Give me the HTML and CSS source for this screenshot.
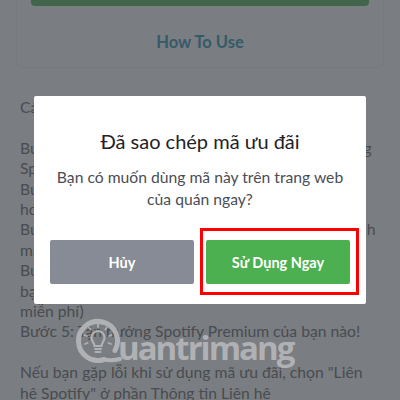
FILE: index.html
```html
<!DOCTYPE html>
<html lang="vi">
<head>
<meta charset="utf-8">
<title>Spotify</title>
<link rel="stylesheet" href="styles.css">
</head>
<body>
<div class="page">
  <section class="card">
    <div class="card-btn"></div>
    <a class="how">How To Use</a>
  </section>
  <article class="steps">
    <p>Cách sử dụng mã ưu đãi:</p>
    <p>Bước 1: Nhấn nút Sử Dụng Ngay để vào trang đăng<br>Spotify Premium<br>Bước 2: Đăng nhập tài khoản<br>hoặc tạo tài khoản mới<br>Bước 3: Chọn phương thức, rồi nhập mã thật nhanh<br>mã ưu đãi<br>Bước 4: Xác nhận thanh toán để<br>bạn nhận được 3 tháng<br>miễn phí)<br>Bước 5: Tận hưởng Spotify Premium của bạn nào!</p>
    <p>Nếu bạn gặp lỗi khi sử dụng mã ưu đãi, chọn "Liên<br>hệ Spotify" ở phần Thông tin Liên hệ</p>
  </article>
</div>
<div class="overlay">
  <div class="modal">
    <h2 class="title">Đã sao chép mã ưu đãi</h2>
    <p class="msg">Bạn có muốn dùng mã này trên trang web<br>của quán ngay?</p>
    <div class="actions">
      <button class="btn cancel">Hủy</button>
      <button class="btn go">Sử Dụng Ngay</button>
    </div>
  </div>
</div>
<div class="mark-box"></div>
<div class="wm">
  <svg class="wm-q" viewBox="0 0 48 48" width="48" height="48" aria-hidden="true">
    <path d="M30 42.500A19.500 19.500 0 1 1 41 33.500" fill="none" stroke="#b0b1b4" stroke-width="5" stroke-linecap="round"/>
    <path d="M30 42.500Q38 44 46 42" fill="none" stroke="#b0b1b4" stroke-width="4" stroke-linecap="round"/>
    <path d="M20.500 29c0-3-3-4.500-3-8.500a6.500 6.500 0 0 1 13 0c0 4-3 5.500-3 8.500z" fill="none" stroke="#b0b1b4" stroke-width="2.200"/>
    <path d="M21 32h6M21.500 35h5" stroke="#b0b1b4" stroke-width="2" stroke-linecap="round"/>
    <path d="M24 7v3M15 10.500l1.600 2M33 10.500l-1.600 2M10.500 18l2.500 1M37.500 18l-2.500 1M11 27l2.500-1M37 27l-2.500-1" stroke="#b0b1b4" stroke-width="1.800" stroke-linecap="round"/>
  </svg>
  <span class="wm-text">uantrimang</span>
</div>
</body>
</html>
```
FILE: styles.css
```css
* { box-sizing: border-box; }
html, body { margin: 0; height: 400px; overflow: hidden; }
body { background: #fff; font-family: Lato, "Noto Sans", sans-serif; }
.page { padding: 0 16px; height: 400px; overflow: hidden; }
.card {
  height: 68px;
  border: 1px solid #f0f0f0;
  border-top: 0;
  border-radius: 0 0 8px 8px;
  padding: 0 14px;
  display: flex;
  flex-direction: column;
  align-items: center;
}
.card-btn { width: 100%; height: 6px; background: #4caf50; border-radius: 0 0 4px 4px; flex: none; }
.how { margin-top: 26px; font-size: 16.5px; line-height: 20px; font-weight: 700; color: #1e8fb4; }
.steps { padding: 29px 4px 0; font-size: 15.7px; line-height: 20.4px; color: #606060; white-space: nowrap; }
.steps p { margin: 0 0 20.4px; }
.overlay {
  position: absolute; inset: 0;
  background: rgba(63, 66, 72, .69);
  display: flex; justify-content: center; align-items: flex-start;
  padding-top: 96px;
}
.modal {
  width: 332px; height: 208px;
  background: #fff; border-radius: 2px;
  padding: 32px 16px 0;
  text-align: center;
}
.title { margin: 0; font-size: 20px; line-height: 26px; font-weight: 400; color: #1f2226; }
.msg { margin: 12px 0 0; font-size: 15.7px; line-height: 22px; color: #4a4d55; }
.actions { display: flex; gap: 12px; margin-top: 30px; }
.btn {
  flex: 1; height: 44px; border: 0; border-radius: 2px;
  font: 700 14.500px Lato, "Noto Sans", sans-serif; color: #fff;
}
.cancel { background: #878b95; }
.go { background: #4caf50; }
.mark-box {
  position: absolute; left: 200px; top: 228px; width: 159px; height: 67px;
  border: 3px solid #f00;
}
.wm { position: absolute; left: 74px; top: 317px; display: flex; align-items: flex-start; }
.wm-q { flex: none; }
.wm-text { font: 700 33px/1 "Open Sans", sans-serif; letter-spacing: -2px; color: #b0b1b4; margin: 14px 0 0 -4px; }
```
